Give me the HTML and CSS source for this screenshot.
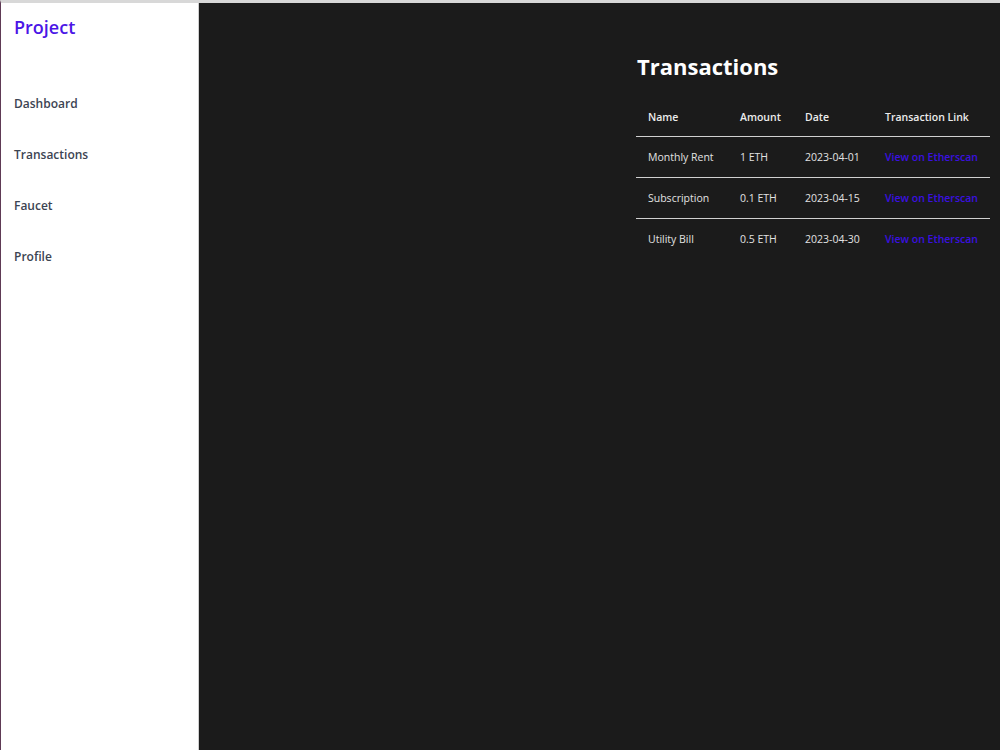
FILE: index.html
```html
<!DOCTYPE html>
<html>
<head>
<meta charset="utf-8">
<link rel="stylesheet" href="styles.css">
</head>
<body>
<div class="app">
  <aside class="sidebar">
    <div class="brand">Project</div>
    <nav class="nav">
      <a class="nav-item">Dashboard</a>
      <a class="nav-item">Transactions</a>
      <a class="nav-item">Faucet</a>
      <a class="nav-item">Profile</a>
    </nav>
  </aside>
  <main class="main">
    <section class="panel">
      <h1 class="title">Transactions</h1>
      <table class="tx">
        <thead>
          <tr><th class="c-name">Name</th><th class="c-amt">Amount</th><th class="c-date">Date</th><th class="c-link">Transaction Link</th></tr>
        </thead>
        <tbody>
          <tr><td>Monthly Rent</td><td>1 ETH</td><td>2023-04-01</td><td><a class="link">View on Etherscan</a></td></tr>
          <tr><td>Subscription</td><td>0.1 ETH</td><td>2023-04-15</td><td><a class="link">View on Etherscan</a></td></tr>
          <tr><td>Utility Bill</td><td>0.5 ETH</td><td>2023-04-30</td><td><a class="link">View on Etherscan</a></td></tr>
        </tbody>
      </table>
    </section>
  </main>
</div>
</body>
</html>
```
FILE: styles.css
```css
html, body {
  margin: 0;
  padding: 0;
  height: 100%;
}
body {
  font-family: "Open Sans", "Noto Sans", sans-serif;
  background: #1b1b1b;
  border-top: 3px solid #d8d8d8;
  border-left: 1px solid #5e3a55;
  box-sizing: border-box;
}
.app {
  display: flex;
  height: 100%;
}
.sidebar {
  width: 197px;
  flex: none;
  background: #ffffff;
  border-right: 1px solid #cfcfcf;
}
.brand {
  color: #4b16e6;
  font-size: 18px;
  font-weight: 600;
  padding: 12px 0 0 13px;
  line-height: 24px;
}
.nav {
  display: flex;
  flex-direction: column;
  padding-top: 39px;
}
.nav-item {
  color: #3c4452;
  font-size: 12px;
  font-weight: 600;
  padding: 0 13px;
  line-height: 51px;
}
.main {
  flex: 1;
  display: flex;
  justify-content: flex-end;
  padding: 48px 10px 0 0;
}
.panel {
  width: 354px;
}
.title {
  margin: 0 0 0 1px;
  color: #ffffff;
  font-size: 22px;
  font-weight: 700;
  line-height: 30px;
}
.tx {
  margin-top: 15px;
  width: 354px;
  table-layout: fixed;
  border-collapse: collapse;
  font-size: 10.5px;
  color: #e2e2e2;
}
.c-name { width: 68px; }
.c-amt { width: 41px; }
.c-date { width: 56px; }
.c-link { width: 93px; }
.tx th {
  text-align: left;
  font-weight: 600;
  color: #ececec;
  padding: 2px 12px 0;
  height: 38px;
  border-bottom: 1px solid #d0d0d0;
  white-space: nowrap;
}
.tx td {
  padding: 0 12px;
  height: 40px;
  white-space: nowrap;
}
.tx tbody tr + tr td {
  border-top: 1px solid #d0d0d0;
}
.link {
  color: #3a10e0;
  font-weight: 600;
}
```
